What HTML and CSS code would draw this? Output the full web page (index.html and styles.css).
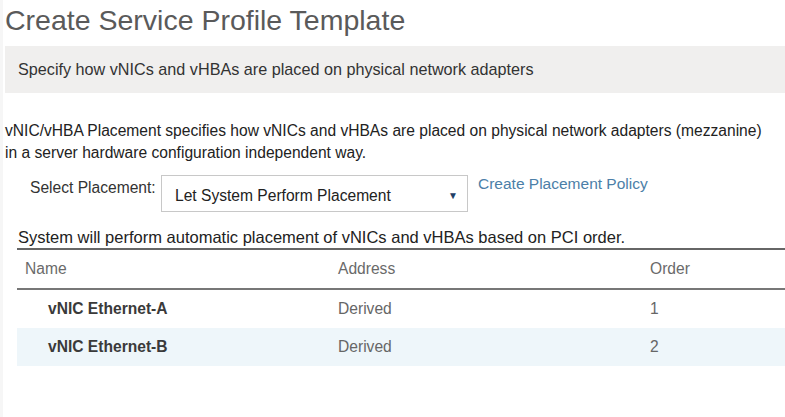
FILE: index.html
```html
<!DOCTYPE html>
<html>
<head>
<meta charset="utf-8">
<link rel="stylesheet" href="styles.css">
</head>
<body>
<div class="page">
  <h1 class="title">Create Service Profile Template</h1>
  <div class="banner">Specify how vNICs and vHBAs are placed on physical network adapters</div>
  <p class="desc">vNIC/vHBA Placement specifies how vNICs and vHBAs are placed on physical network adapters (mezzanine)<br>in a server hardware configuration independent way.</p>
  <div class="placement">
    <span class="label">Select Placement:</span>
    <div class="select">
      <span>Let System Perform Placement</span>
      <span class="arrow">&#9660;</span>
    </div>
    <a class="link">Create Placement Policy</a>
  </div>
  <div class="note">System will perform automatic placement of vNICs and vHBAs based on PCI order.</div>
  <div class="table">
    <div class="row head">
      <div class="c1">Name</div><div class="c2">Address</div><div class="c3">Order</div>
    </div>
    <div class="row">
      <div class="c1 name">vNIC Ethernet-A</div><div class="c2">Derived</div><div class="c3">1</div>
    </div>
    <div class="row alt">
      <div class="c1 name">vNIC Ethernet-B</div><div class="c2">Derived</div><div class="c3">2</div>
    </div>
  </div>
</div>
</body>
</html>
```
FILE: styles.css
```css
html, body {
  margin: 0;
  padding: 0;
  background: #fff;
}
body {
  font-family: "Liberation Sans", Arial, sans-serif;
  color: #333;
  width: 785px;
  height: 417px;
  overflow: hidden;
}
.page {
  border-left: 3px solid #f6f6f6;
  padding-left: 2px;
  height: 417px;
}
.title {
  margin: 0;
  padding-top: 4px;
  font-weight: normal;
  font-size: 28.5px;
  line-height: 32px;
  color: #5a5a5a;
  height: 42px;
}
.banner {
  background: #f0efee;
  height: 47px;
  line-height: 47px;
  padding-left: 13px;
  font-size: 16.2px;
  color: #333;
}
.desc {
  margin: 27px 0 0 0;
  font-size: 15.6px;
  line-height: 22px;
  color: #222;
}
.placement {
  display: flex;
  align-items: flex-start;
  margin-top: 11px;
  padding-left: 25px;
}
.label {
  font-size: 15.6px;
  margin-top: 4px;
  width: 131px;
}
.select {
  box-sizing: border-box;
  width: 307px;
  height: 37px;
  border: 1px solid #c8c8c8;
  display: flex;
  align-items: center;
  justify-content: space-between;
  padding: 4px 9px 0 13px;
  font-size: 15.6px;
  color: #222;
}
.arrow {
  font-size: 10px;
  color: #1f3f66;
}
.link {
  margin-left: 10px;
  margin-top: 0px;
  font-size: 15.5px;
  color: #4c7fa8;
}
.note {
  margin-top: 16px;
  padding-left: 13px;
  font-size: 16.5px;
  line-height: 18px;
  color: #222;
}
.table {
  margin-left: 12px;
  border-top: 2px solid #666;
  margin-top: 2px;
}
.row {
  display: flex;
  height: 38px;
  align-items: center;
  font-size: 15.6px;
  color: #666;
}
.row.head {
  height: 38px;
  border-bottom: 2px solid #777;
  color: #6a6a6a;
}
.row.alt {
  background: #eef6fa;
}
.c1 { width: 313px; padding-left: 8px; }
.c2 { width: 312px; }
.c3 { flex: 1; }
.name {
  font-weight: bold;
  padding-left: 31px;
  width: 290px;
  color: #3a3a3a;
}
```
